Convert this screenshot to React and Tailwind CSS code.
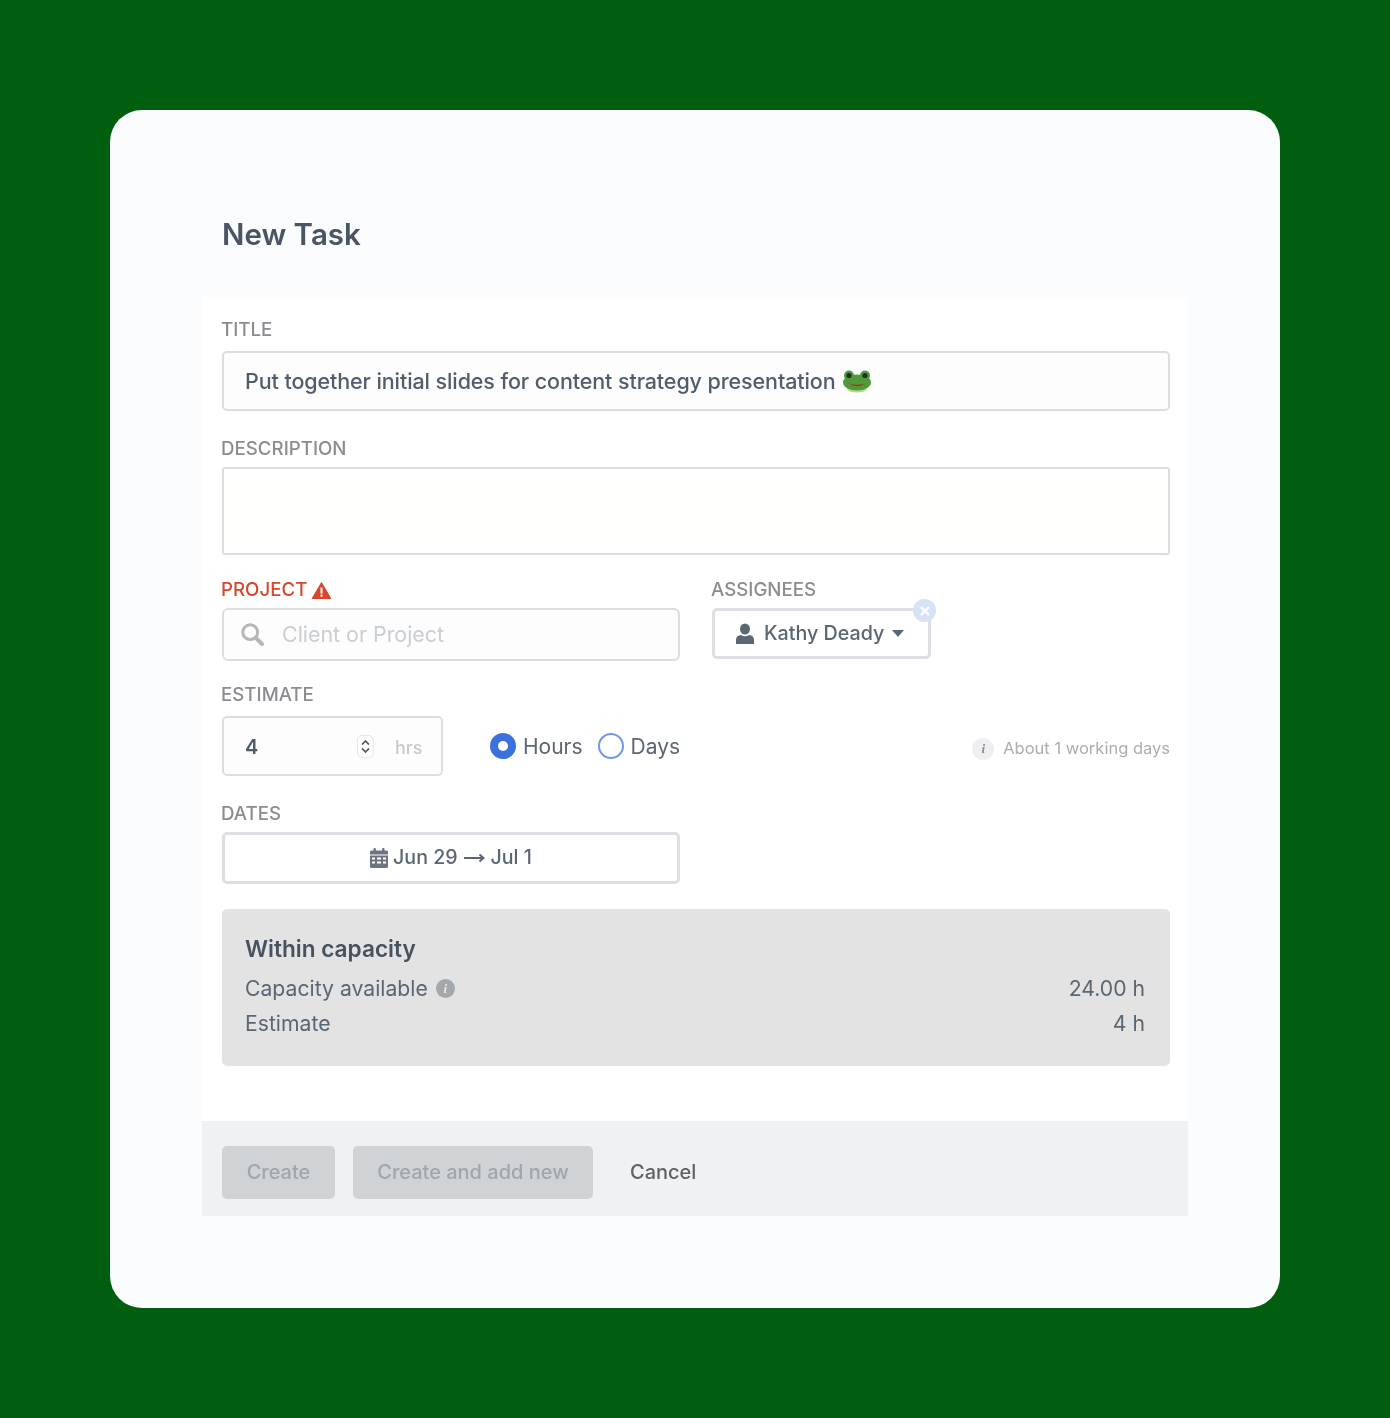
function Label({ children, className = '' }) {
  return <div className={`-ml-px flex h-[22px] items-center pt-px text-[18.7px] font-medium text-[#8a8c90] ${className}`}>{children}</div>
}

function Frog() {
  return (
    <svg width="30" height="24" viewBox="0 0 30 24" className="ml-[7px] -translate-x-px">
      <ellipse cx="15" cy="20" rx="10" ry="3.5" fill="#b5d98a" />
      <ellipse cx="15" cy="13.5" rx="14" ry="8" fill="#4f9a3b" />
      <circle cx="7" cy="6.5" r="5" fill="#4f9a3b" />
      <circle cx="23" cy="6.5" r="5" fill="#4f9a3b" />
      <circle cx="7" cy="6.5" r="2.6" fill="#20301c" />
      <circle cx="23" cy="6.5" r="2.6" fill="#20301c" />
      <path d="M6 14.5 Q15 20 24 14.5 Q15 17 6 14.5Z" fill="#a8352c" />
    </svg>
  )
}

function Warning() {
  return (
    <svg width="19" height="17" viewBox="0 0 19 17" className="ml-[5px]">
      <path d="M9.5 0.5 L18.8 16.5 H0.2Z" fill="#d6472b" stroke="#d6472b" strokeLinejoin="round" />
      <rect x="8.5" y="5.5" width="2" height="6" fill="#fff" />
      <rect x="8.5" y="12.6" width="2" height="2" fill="#fff" />
    </svg>
  )
}

function SearchGlyph() {
  return (
    <svg width="23" height="23" viewBox="0 0 23 23" fill="none" stroke="#b4b6b8">
      <circle cx="9.2" cy="9.2" r="7.4" strokeWidth="3" />
      <path d="M14.8 14.8 L21 21" strokeWidth="4" strokeLinecap="round" />
    </svg>
  )
}

function Person() {
  return (
    <svg width="20" height="21" viewBox="0 0 20 21">
      <ellipse cx="10" cy="6" rx="5" ry="5.6" fill="#5b6673" />
      <path d="M1 21 V17 Q1 12.5 6 12 Q10 14.5 14 12 Q19 12.5 19 17 V21Z" fill="#5b6673" />
    </svg>
  )
}

function Calendar() {
  return (
    <svg width="18" height="20" viewBox="0 0 18 20" fill="#6b7480">
      <rect x="3.5" y="0" width="2.4" height="4.5" rx="1" />
      <rect x="12.1" y="0" width="2.4" height="4.5" rx="1" />
      <path d="M0 4 Q0 2.5 1.5 2.5 H16.5 Q18 2.5 18 4 V6.5 H0Z" />
      <path fillRule="evenodd" d="M0 7.5 H18 V18.5 Q18 20 16.5 20 H1.5 Q0 20 0 18.5Z M2 9.5 V11.5 H5 V9.5Z M7 9.5 V11.5 H11 V9.5Z M13 9.5 V11.5 H16 V9.5Z M2 13.5 V15.5 H5 V13.5Z M7 13.5 V15.5 H11 V13.5Z M13 13.5 V15.5 H16 V13.5Z" />
    </svg>
  )
}

function Spinner() {
  return (
    <span className="flex h-[23px] w-[17px] flex-col items-center justify-center gap-[3px] rounded-[5px] border border-[#e6e6e6]">
      <svg width="9" height="5" viewBox="0 0 9 5" fill="none"><path d="M1 4.5L4.5 1L8 4.5" stroke="#555" strokeWidth="1.7" /></svg>
      <svg width="9" height="5" viewBox="0 0 9 5" fill="none"><path d="M1 0.5L4.5 4L8 0.5" stroke="#555" strokeWidth="1.7" /></svg>
    </span>
  )
}

function InfoDot({ className }) {
  return (
    <span className={`flex items-center justify-center rounded-full font-['Liberation_Serif',serif] font-bold italic ${className}`}>i</span>
  )
}

export default function App() {
  return (
    <div className="min-h-[1418px] bg-[#015e0e] p-[110px] font-['Inter',sans-serif]">
      <div className="rounded-[32px] bg-[#fbfcfe] px-[92px] pb-[92px]">
        <div className="blur-[0.5px]">
          <div className="flex h-[187px] items-start px-5 pt-[105px]">
            <h1 className="text-[29.5px] font-semibold leading-[38px] text-[#4a5563]">New Task</h1>
          </div>

          <div className="bg-white pb-[55px] pl-5 pr-[18px] pt-[22px]">
            <Label className="mb-[10px]">TITLE</Label>
            <div className="flex h-[60px] items-center rounded-[5px] border-2 border-[#dcdde0] bg-[#fdfdfd] pl-[21px] text-[21.5px] font-medium tracking-[-0.1px] text-[#525d6b]">
              Put together initial slides for content strategy presentation
              <Frog />
            </div>

            <Label className="mb-[7px] mt-[27px]">DESCRIPTION</Label>
            <div className="h-[88px] rounded-[3px] border-2 border-[#dcdde0] bg-[#fffffd]" />

            <div className="mt-6 flex items-start">
              <div className="w-[458px]">
                <Label className="mb-[7px] text-[#d6472b]">PROJECT<Warning /></Label>
                <div className="flex h-[53px] items-center rounded-[6px] border-2 border-[#dcdde0] bg-[#fdfdfd] pl-[17px] text-[21.4px] text-[#c9ced3]">
                  <SearchGlyph />
                  <span className="ml-[18px]">Client or Project</span>
                </div>
              </div>
              <div className="ml-[32px]">
                <Label className="mb-[7px]">ASSIGNEES</Label>
                <div className="relative flex h-[51px] w-[219px] items-center rounded-[5px] border-[3px] border-[#dcdfe3] bg-white pl-[20px] text-[19.7px] font-medium text-[#5b6673]">
                  <Person />
                  <span className="ml-[9px]">Kathy Deady</span>
                  <svg width="12" height="7" viewBox="0 0 12 7" className="ml-[8px]"><path d="M0 0H12L6 7Z" fill="#5b6673" /></svg>
                  <span className="absolute -right-[8px] -top-[12px] flex h-[23px] w-[23px] items-center justify-center rounded-full bg-[#d6e2f7]">
                    <svg width="10" height="10" viewBox="0 0 10 10"><path d="M1 1L9 9M9 1L1 9" stroke="#fff" strokeWidth="2.4" /></svg>
                  </span>
                </div>
              </div>
            </div>

            <Label className="mb-[10px] mt-[23px]">ESTIMATE</Label>
            <div className="flex items-center">
              <div className="flex h-[60px] w-[221px] items-center rounded-[5px] border-2 border-[#dcdde0] bg-[#fdfdfd] pl-[21px]">
                <span className="w-[112px] pt-[2px] text-[20px] font-semibold text-[#525d6b]">4</span>
                <Spinner />
                <span className="ml-[21px] pt-[2px] text-[18px] font-medium text-[#c6c9cd]">hrs</span>
              </div>
              <div className="ml-[47px] flex items-center text-[21px] text-[#5b6673]">
                <span className="flex h-[26px] w-[26px] items-center justify-center rounded-full bg-[#3b71dc]">
                  <span className="h-[10px] w-[10px] rounded-full bg-white" />
                </span>
                <span className="ml-[7px] pt-[2px]">Hours</span>
                <span className="ml-[15px] h-[26px] w-[26px] rounded-full border-2 border-[#6f97e6]" />
                <span className="ml-[7px] pt-[2px]">Days</span>
              </div>
              <div className="ml-auto mt-[5px] flex items-center text-[16.5px] text-[#a9adb2]">
                <InfoDot className="h-[22px] w-[22px] bg-[#efeff2] text-[13px] text-[#8b8b8b]" />
                <span className="ml-[9px]">About 1 working days</span>
              </div>
            </div>

            <Label className="mb-[7px] mt-[27px]">DATES</Label>
            <div className="flex h-[52px] w-[458px] items-center justify-center rounded-[5px] border-[3px] border-[#dcdfe3] bg-white text-[19.6px] font-medium text-[#5b6673]">
              <Calendar />
              <span className="ml-[5px]">Jun 29</span>
              <svg width="21" height="10" viewBox="0 0 21 10" fill="none" className="mx-[6px]">
                <path d="M0 5H19M15.5 1.5L19.5 5L15.5 8.5" stroke="#5b6673" strokeWidth="2" />
              </svg>
              <span>Jul 1</span>
            </div>

            <div className="mt-[25px] h-[157px] rounded-[5px] bg-[#e3e3e4] pl-[23px] pr-[25px] pt-[24px] text-[21.2px] text-[#5b6673]">
              <div className="text-[22.6px] font-semibold leading-[32px] text-[#465260]">Within capacity</div>
              <div className="mt-[8px] flex h-[32px] items-center justify-between">
                <div className="flex items-center">
                  Capacity available
                  <InfoDot className="ml-[8px] h-[19px] w-[19px] bg-[#a3a8ad] text-[13px] text-[#e8e8e8]" />
                </div>
                <span>24.00 h</span>
              </div>
              <div className="mt-[3px] flex h-[32px] items-center justify-between">
                <span>Estimate</span>
                <span>4 h</span>
              </div>
            </div>
          </div>

          <div className="flex h-[95px] items-start bg-[#eff1f3] px-5 pt-[25px] text-[20px] font-medium">
            <button className="h-[53px] w-[113px] rounded-[5px] bg-[#cfd3d5] pb-[2px] text-[#a0a6ab]">Create</button>
            <button className="ml-[18px] h-[53px] w-[240px] rounded-[5px] bg-[#cfd3d5] pb-[2px] text-[#a0a6ab]">Create and add new</button>
            <button className="ml-[37px] h-[53px] pb-[2px] text-[#5e6268]">Cancel</button>
          </div>
        </div>
      </div>
    </div>
  )
}
